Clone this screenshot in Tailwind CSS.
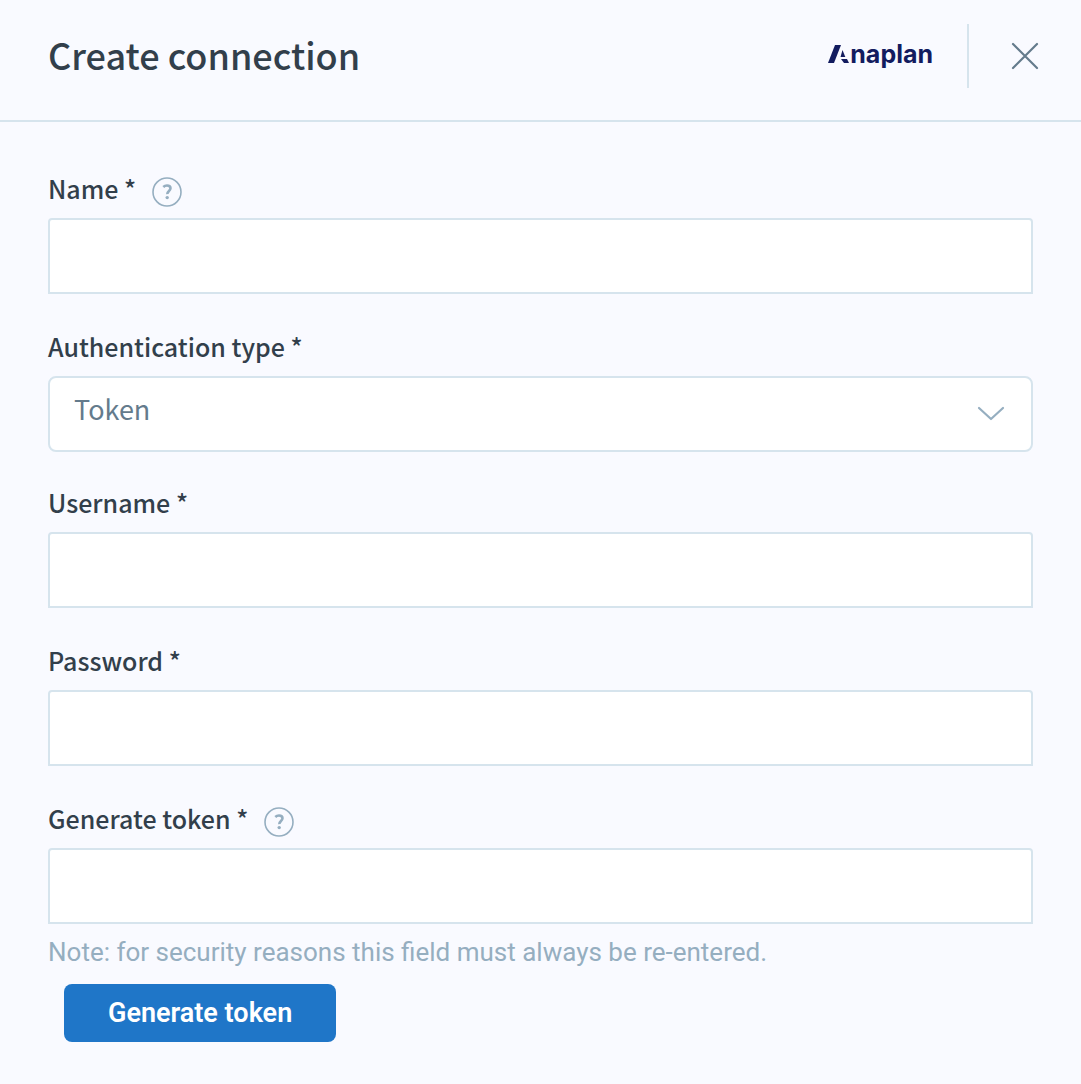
<!DOCTYPE html>
<html lang="en">
<head>
  <meta charset="UTF-8" />
  <meta name="viewport" content="width=device-width, initial-scale=1.0"/>
  <title>Create connection</title>
  <script src="https://cdn.jsdelivr.net/npm/@tailwindcss/browser@4"></script>
</head>
<body class="bg-[#f9faff] min-h-screen font-['Noto_Sans_CJK_SC','Noto_Sans',sans-serif] text-[#323f4b]">

  <!-- Header -->
  <header class="flex items-center justify-between border-b-2 border-[#d6e4ed] pl-12 pr-[42px] pt-6 pb-8">
    <h1 class="text-[36px] leading-14 pb-1 font-medium">Create connection</h1>
    <div class="flex items-center">
      <div class="flex items-baseline text-[#131c5f] mr-[34px] pb-1 font-['Inter',sans-serif] text-[25px] leading-8 font-bold" role="img" aria-label="Anaplan">
        <svg class="w-[22px] h-[19px]" viewBox="0 0 22 19" fill="currentColor" aria-hidden="true">
          <path d="M7 1h6L6 19H0z"/>
          <path d="M14.500 6l2.800 7h-4.800z"/>
          <path d="M13 15h6l2 4h-5z"/>
        </svg>
        <span>naplan</span>
      </div>
      <div class="w-[2px] h-16 bg-[#d6e4ed]"></div>
      <button type="button" class="ml-[42px]" aria-label="Close">
        <svg class="size-7" viewBox="0 0 28 28" fill="none" stroke="#647b8c" stroke-width="2.2" stroke-linecap="round">
          <path d="M2 2l24 24M26 2L2 26"/>
        </svg>
      </button>
    </div>
  </header>

  <!-- Form -->
  <main class="px-12 pt-[54px] pb-10">
    <form>
      <div class="pb-10">
        <div class="flex items-center h-8 mb-[10px]">
          <label for="name" class="text-[25px] leading-7 pb-2 font-medium">Name *</label>
          <button type="button" class="ml-4" aria-label="Help for name">
            <svg class="size-[30px]" viewBox="0 0 30 30" fill="none" stroke="#95aec0">
              <circle cx="15" cy="15" r="14" stroke-width="1.6"/>
              <path d="M11.300 10c1-1 2.200-1.500 3.700-1.500 2.200 0 3.500 1.100 3.500 2.800 0 2.600-3.300 2.800-3.200 5.800" stroke-width="2.600"/>
              <circle cx="15.200" cy="20.600" r="1.700" fill="#95aec0" stroke="none"/>
            </svg>
          </button>
        </div>
        <input id="name" type="text" class="block w-full h-[76px] px-6 text-[27px] bg-white border-2 border-[#d6e4ed] rounded-t"/>
      </div>

      <div class="pb-[38px]">
        <div class="flex items-center h-8 mb-[10px]">
          <label for="auth" class="text-[25px] leading-7 pb-2 font-medium">Authentication type *</label>
        </div>
        <div class="relative">
          <select id="auth" class="block appearance-none w-full h-[76px] pl-6 pr-16 pb-2.5 text-[27px] text-[#647b8c] bg-white border-2 border-[#d6e4ed] rounded-lg">
            <option>Token</option>
          </select>
          <svg class="absolute right-7 top-[30px] w-7 h-4 pointer-events-none" viewBox="0 0 28 16" fill="none" stroke="#95aec0" stroke-width="2.2" stroke-linecap="round" stroke-linejoin="round">
            <path d="M2 2l12 11L26 2"/>
          </svg>
        </div>
      </div>

      <div class="pb-10">
        <div class="flex items-center h-8 mb-[10px]">
          <label for="username" class="text-[25px] leading-7 pb-2 font-medium">Username *</label>
        </div>
        <input id="username" type="text" class="block w-full h-[76px] px-6 text-[27px] bg-white border-2 border-[#d6e4ed] rounded-t"/>
      </div>

      <div class="pb-10">
        <div class="flex items-center h-8 mb-[10px]">
          <label for="password" class="text-[25px] leading-7 pb-2 font-medium">Password *</label>
        </div>
        <input id="password" type="password" class="block w-full h-[76px] px-6 text-[27px] bg-white border-2 border-[#d6e4ed] rounded-t"/>
      </div>

      <div>
        <div class="flex items-center h-8 mb-[10px]">
          <label for="token" class="text-[25px] leading-7 pb-2 font-medium">Generate token *</label>
          <button type="button" class="ml-4" aria-label="Help for generate token">
            <svg class="size-[30px]" viewBox="0 0 30 30" fill="none" stroke="#95aec0">
              <circle cx="15" cy="15" r="14" stroke-width="1.6"/>
              <path d="M11.300 10c1-1 2.200-1.500 3.700-1.500 2.200 0 3.500 1.100 3.500 2.800 0 2.600-3.300 2.800-3.200 5.800" stroke-width="2.600"/>
              <circle cx="15.200" cy="20.600" r="1.700" fill="#95aec0" stroke="none"/>
            </svg>
          </button>
        </div>
        <input id="token" type="text" class="block w-full h-[76px] px-6 text-[27px] bg-white border-2 border-[#d6e4ed] rounded-t"/>
        <p class="mb-1 text-[26px] leading-14 font-['Roboto',sans-serif] text-[#95aec0]">Note: for security reasons this field must always be re-entered.</p>
      </div>

      <button type="button" class="ml-4 h-[58px] px-11 rounded-lg bg-[#1f76c8] text-white text-[27px] font-semibold font-['Roboto',sans-serif]">Generate token</button>
    </form>
  </main>

</body>
</html>
